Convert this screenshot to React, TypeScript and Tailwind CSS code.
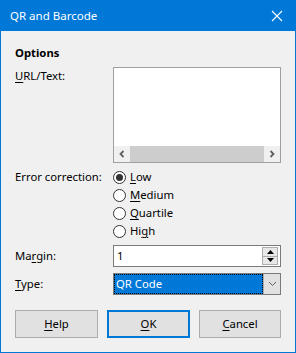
import React from "react";

const font = { fontFamily: '"Noto Sans", "Liberation Sans", sans-serif' };

function Radio({ u, rest, pre = "", checked = false }: { u: string; rest: string; pre?: string; checked?: boolean }) {
  return (
    <div className="flex h-[18px] items-center">
      <div className="flex h-[13px] w-[13px] items-center justify-center rounded-full border border-[#333333] bg-white">
        {checked && <div className="h-[7px] w-[7px] rounded-full bg-[#333333]" />}
      </div>
      <span className="ml-[4px] text-[11.3px] leading-[16px] text-black">
        {pre}
        <span className="underline underline-offset-2">{u}</span>
        {rest}
      </span>
    </div>
  );
}

export default function App() {
  return (
    <div className="flex h-[353px] w-[296px] flex-col bg-[#0078d7]" style={font}>
      <div className="flex h-[31px] items-center justify-between pl-[10px] pr-[10px]">
        <span className="text-[11.5px] leading-[16px] text-white">QR and Barcode</span>
        <svg width="12" height="12" viewBox="0 0 12 12" className="mr-[3px]">
          <path d="M1 1 L11 11 M11 1 L1 11" stroke="white" strokeWidth="1.1" />
        </svg>
      </div>
      <div className="mx-[1px] mb-[1px] flex flex-1 flex-col bg-[#f0f0f0] pl-[14px] pr-[14px] pt-[14px] text-[11.3px] leading-[16px] text-black">
        <div className="font-bold">Options</div>
        <div className="mt-[6px] flex">
          <div className="w-[98px] pt-[1px]">
            <span className="underline underline-offset-2">U</span>RL/Text:
          </div>
          <div className="flex h-[96px] w-[168px] flex-col border border-[#a0a0a0] bg-white">
            <div className="flex-1" />
            <div className="flex h-[16px] items-stretch bg-[#f0f0f0]">
              <div className="flex w-[16px] items-center justify-center">
                <svg width="8" height="8" viewBox="0 0 8 8">
                  <path d="M5.5 1 L2.5 4 L5.5 7" stroke="#606060" strokeWidth="1.8" fill="none" />
                </svg>
              </div>
              <div className="flex-1 bg-[#cdcdcd]" />
              <div className="flex w-[16px] items-center justify-center">
                <svg width="8" height="8" viewBox="0 0 8 8">
                  <path d="M2.5 1 L5.5 4 L2.5 7" stroke="#606060" strokeWidth="1.8" fill="none" />
                </svg>
              </div>
            </div>
          </div>
        </div>
        <div className="mt-[5px] flex">
          <div className="flex h-[18px] w-[98px] items-center">Error correction:</div>
          <div className="flex flex-col">
            <Radio u="L" rest="ow" checked />
            <Radio u="M" rest="edium" />
            <Radio u="Q" rest="uartile" />
            <Radio pre="Hi" u="g" rest="h" />
          </div>
        </div>
        <div className="mt-[5px] flex items-center">
          <div className="w-[98px]">
            Ma<span className="underline underline-offset-2">r</span>gin:
          </div>
          <div className="flex h-[22px] w-[168px] items-center border border-[#7a7a7a] bg-white pl-[3px] pr-[2px]">
            <span className="flex-1">1</span>
            <div className="flex h-[18px] w-[16px] flex-col border border-[#adadad] bg-[#e8e8e8]">
              <div className="flex flex-1 items-center justify-center border-b border-[#adadad]">
                <svg width="7" height="4" viewBox="0 0 7 4"><path d="M0 4 L3.5 0 L7 4 Z" fill="#000" /></svg>
              </div>
              <div className="flex flex-1 items-center justify-center">
                <svg width="7" height="4" viewBox="0 0 7 4"><path d="M0 0 L3.5 4 L7 0 Z" fill="#000" /></svg>
              </div>
            </div>
          </div>
        </div>
        <div className="mt-[6px] flex items-center">
          <div className="w-[98px]">
            <span className="underline underline-offset-2">T</span>ype:
          </div>
          <div className="flex h-[22px] w-[168px] border border-[#7a7a7a] bg-[#e5e5e5]">
            <div className="flex flex-1 items-center border border-dotted border-black bg-[#0078d7] pl-[1px] text-white">
              QR Code
            </div>
            <div className="flex w-[17px] items-center justify-center border-l border-[#adadad] bg-[#e1e1e1]">
              <svg width="9" height="6" viewBox="0 0 9 6">
                <path d="M1 1 L4.5 4.5 L8 1" stroke="#606060" strokeWidth="1" fill="none" />
              </svg>
            </div>
          </div>
        </div>
        <div className="mt-[15px] flex gap-[9px]">
          <button className="flex h-[28px] w-[83px] items-center justify-center border border-[#adadad] bg-[#e1e1e1]">
            <span className="underline underline-offset-2">H</span>elp
          </button>
          <button className="flex h-[28px] w-[83px] items-center justify-center border-2 border-[#0078d7] bg-[#e1e1e1]">
            <span className="underline underline-offset-2">O</span>K
          </button>
          <button className="flex h-[28px] w-[82px] items-center justify-center border border-[#adadad] bg-[#e1e1e1]">
            <span className="underline underline-offset-2">C</span>ancel
          </button>
        </div>
      </div>
    </div>
  );
}
